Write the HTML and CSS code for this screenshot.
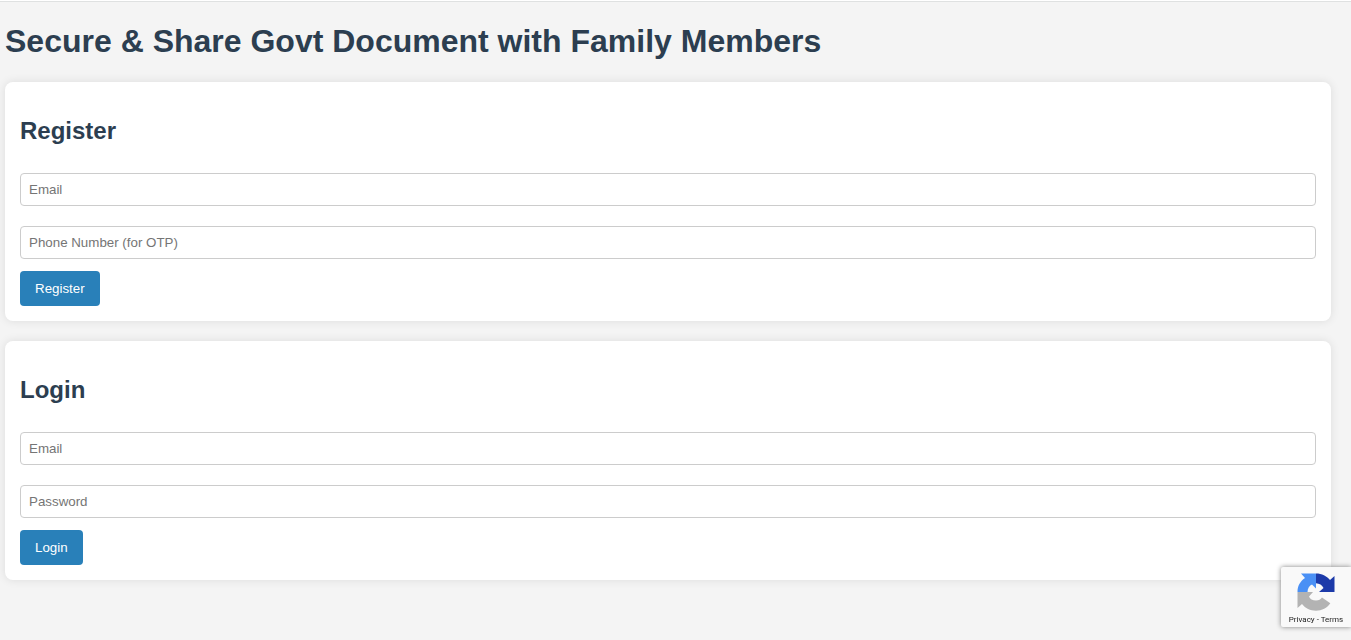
FILE: index.html
```html
<!DOCTYPE html>
<html lang="en">
<head>
<meta charset="utf-8">
<meta name="viewport" content="width=device-width, initial-scale=1">
<title>Secure &amp; Share Govt Document</title>
<link rel="stylesheet" href="styles.css">
</head>
<body>
<main class="page">
  <h1 class="page-title">Secure &amp; Share Govt Document with Family Members</h1>
  <form class="card">
    <h2 class="card-title">Register</h2>
    <input class="field" type="email" placeholder="Email" aria-label="Email">
    <input class="field" type="tel" placeholder="Phone Number (for OTP)" aria-label="Phone Number (for OTP)">
    <button class="button" type="button">Register</button>
  </form>
  <form class="card">
    <h2 class="card-title">Login</h2>
    <input class="field" type="email" placeholder="Email" aria-label="Email">
    <input class="field" type="password" placeholder="Password" aria-label="Password">
    <button class="button" type="button">Login</button>
  </form>
</main>
<aside class="badge">
  <svg class="badge-logo" viewBox="0 0 38 38" aria-hidden="true">
    <path fill="#1c3aa9" d="M19 .5C25 .5 29.500 3 33 7L37.500 3V19H22L26.500 15C25 12 22.500 10.500 19 10.300Z"/>
    <path fill="#4a90f5" d="M19 .5H4L8 5C3 8.500 .5 13 .5 19H10.500C10.500 15.500 12.500 12.500 15 11.500L19 15.500Z"/>
    <path fill="#b3b3b3" d="M.5 19V35L5 31C8.500 35.500 13 37.700 19 37.700C25 37.700 30 35 33.300 30.300L25 24.500C23.500 26.500 22 27.500 19 27.500C15.500 27.500 13 26 12 23.500L16 19Z"/>
  </svg>
  <p class="badge-links"><a href="#">Privacy</a><span> - </span><a href="#">Terms</a></p>
</aside>
</body>
</html>
```
FILE: styles.css
```css
* { box-sizing: border-box; }
html { background: #f4f4f4; }
body {
  margin: 0;
  border-top: 1px solid #fff;
  color: #2c3e50;
  font-family: "Liberation Sans", Arial, sans-serif;
}
.page { padding: 20px 20px 20px 5px; border-top: 1px solid #dfe1e1; }
.page-title { margin: 0 0 22px; font-size: 32px; line-height: 38px; }
.card {
  margin-bottom: 20px;
  padding: 15px;
  background: #fff;
  border-radius: 8px;
  box-shadow: 0 0 10px rgba(0, 0, 0, 0.1);
}
.card-title { margin: 20px 0; font-size: 24px; line-height: 28px; }
.field {
  display: block;
  width: 100%;
  height: 33px;
  margin: 0 0 20px;
  padding: 8px;
  border: 1px solid #ccc;
  border-radius: 4px;
  font-family: "Liberation Sans", Arial, sans-serif;
}
.card-title + .field { margin-top: 28px; }
.button {
  display: block;
  height: 35px;
  margin-top: -8px;
  padding: 0 15px;
  border: 0;
  border-radius: 4px;
  background: #2980b9;
  color: #fff;
  font-family: "Liberation Sans", Arial, sans-serif;
}
.badge {
  position: fixed;
  right: 0;
  bottom: 13px;
  width: 70px;
  height: 60px;
  padding-top: 6px;
  background: #f9f9f9;
  border-radius: 2px 0 0 2px;
  box-shadow: 0 0 5px #808080;
  text-align: center;
}
.badge-logo { display: block; width: 38px; height: 38px; margin: 0 auto; }
.badge-links { margin: 4px 0 0; font-family: Roboto, Arial, sans-serif; font-size: 8px; line-height: 10px; color: #222; }
.badge-links a { color: inherit; text-decoration: none; }
```
